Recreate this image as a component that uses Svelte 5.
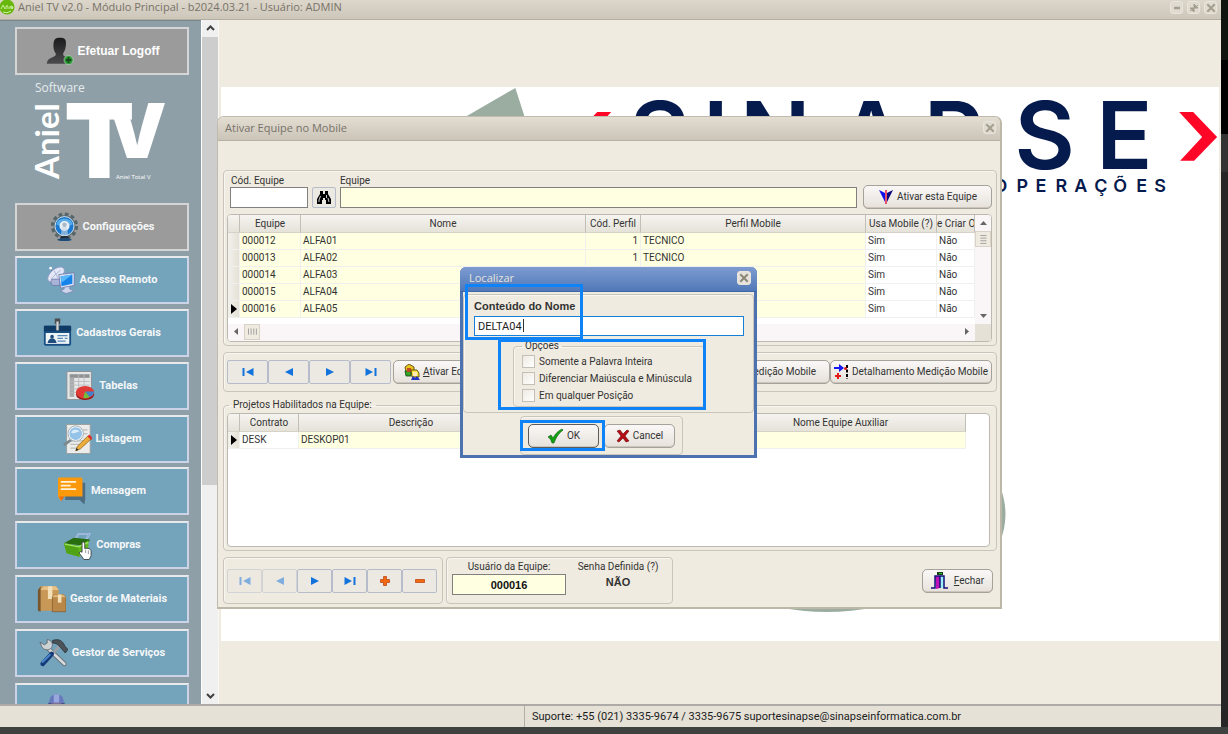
<script>
  const menuTop = [
    { label: 'Configurações', icon: 'gear', gray: true },
    { label: 'Acesso Remoto', icon: 'remote' },
    { label: 'Cadastros Gerais', icon: 'card' },
    { label: 'Tabelas', icon: 'sheet' },
    { label: 'Listagem', icon: 'list' }
  ];
  const menuBottom = [
    { label: 'Mensagem', icon: 'message' },
    { label: 'Compras', icon: 'basket' },
    { label: 'Gestor de Materiais', icon: 'boxes' },
    { label: 'Gestor de Serviços', icon: 'tools' },
    { label: '', icon: 'worker', aria: 'Equipes' }
  ];
  const teams = [
    { code: '000012', name: 'ALFA01', profile: '1', mobile: 'TECNICO' },
    { code: '000013', name: 'ALFA02', profile: '1', mobile: 'TECNICO' },
    { code: '000014', name: 'ALFA03', profile: '1', mobile: 'TECNICO' },
    { code: '000015', name: 'ALFA04', profile: '1', mobile: 'TECNICO' },
    { code: '000016', name: 'ALFA05', profile: '1', mobile: 'TECNICO', current: true }
  ];
  const nav = [
    { icon: 'first', aria: 'Primeiro' },
    { icon: 'prev', aria: 'Anterior' },
    { icon: 'next', aria: 'Próximo' },
    { icon: 'last', aria: 'Último' }
  ];
  const navProjects = [
    { icon: 'first', aria: 'Primeiro', off: true },
    { icon: 'prev', aria: 'Anterior', off: true },
    { icon: 'next', aria: 'Próximo' },
    { icon: 'last', aria: 'Último' },
    { icon: 'plus', aria: 'Incluir' },
    { icon: 'minus', aria: 'Excluir' }
  ];
  const options = ['Somente a Palavra Inteira', 'Diferenciar Maiúscula e Minúscula', 'Em qualquer Posição'];
  let code = $state('');
  let teamName = $state('');
  let search = $state('DELTA04');
  let userCode = $state('000016');
</script>

{#snippet menuIcon(name)}
  <svg class="menu-icon" viewBox="0 0 32 32" aria-hidden="true">
    {#if name === 'user'}
      <defs><linearGradient id="usr" x1="0" y1="0" x2="0" y2="1"><stop offset="0" stop-color="#1b1b1d" /><stop offset="1" stop-color="#4b4b4e" /></linearGradient></defs>
      <path fill="url(#usr)" d="M11 3c2-2 9-2 11 0c2 2 1 9 0 12c-1 2-2 3-2 5c1 3 10 3 10 10H2c0-7 9-7 10-10c0-2-2-3-2-5c-1-3-1-10 1-12z" />
      <circle cx="26" cy="26" r="5" fill="#2f9638" stroke="#c9e8c9" stroke-width=".6" /><path d="M26 23v6M23 26h6" stroke="#124d18" stroke-width="2.2" />
    {:else if name === 'gear'}
      <circle cx="16" cy="15" r="13" fill="none" stroke="#56666a" stroke-width="4" stroke-dasharray="4 2.8" />
      <circle cx="16" cy="15" r="12" fill="#5b6d73" /><circle cx="16" cy="15" r="10.5" fill="#1b78d0" stroke="#dcebf5" stroke-width="1" />
      <path d="M7 13c2-8 16-8 18 0c-5 3-13 3-18 0z" fill="#5badea" />
      <circle cx="16" cy="15" r="5.5" fill="#e9f1f6" /><circle cx="16" cy="13.500" r="2.500" fill="#a9bac6" /><path d="M13 16h6l1 10h-8z" fill="#c8d8e2" opacity=".6" />
      <path d="M12 26h8l1 3H11z" fill="#222e3a" /><ellipse cx="16" cy="30" rx="8" ry="1.5" fill="#1d4c7a" />
    {:else if name === 'remote'}
      <path d="M3 3l4 5" stroke="#79869c" stroke-width="1.200" /><circle cx="4" cy="3" r="1.500" fill="#fff" />
      <ellipse cx="10" cy="10" rx="11" ry="6" transform="rotate(-40 10 10)" fill="#e3e7f6" stroke="#8e98c6" stroke-width="1" />
      <path d="M5 14l10-9M8 6l4 8" stroke="#a2abd0" stroke-width=".9" /><path d="M5 15h9v7H6c-2-2-2-5-1-7z" fill="#aab3d8" stroke="#6873a5" stroke-width=".8" />
      <path d="M13 10l17-2v14l-15 3z" fill="#dfe5f7" stroke="#717caa" /><path d="M15 12l13-2v10l-12 3z" fill="#1683e9" /><path d="M15 12l13-2l-12 9z" fill="#5ab7fa" />
      <path d="M19 24l6-1v3l5 2l-9 3l-6-3l4-2z" fill="#cdd4ec" stroke="#7580ae" stroke-width=".7" />
    {:else if name === 'card'}
      <rect x="1" y="8" width="30" height="22" rx="2" fill="#174f83" /><rect x="1" y="8" width="30" height="6" fill="#103a66" />
      <rect x="3" y="16" width="26" height="12" fill="#eef3f6" /><circle cx="10" cy="20" r="2" fill="#1d4c7d" /><path d="M5 27c1-7 9-7 10 0z" fill="#1d4c7d" />
      <path d="M16 19h11M16 22h6M24 22h3M16 25h9" stroke="#5688b8" stroke-width="1.400" />
      <rect x="13" y="0" width="6" height="6" fill="#4a4d50" /><rect x="14.500" y="3" width="3" height="10" fill="#d5d9dc" stroke="#666" stroke-width=".6" />
    {:else if name === 'sheet'}
      <rect x="1" y="0" width="27" height="31" fill="#e5e7e7" stroke="#8b8f91" /><rect x="4" y="3" width="22" height="4" fill="#8f9394" /><rect x="4" y="7" width="5" height="21" fill="#a9adae" />
      <path d="M4 11h22M4 15h22M4 19h22M4 23h22M14 3v25M20 3v25" stroke="#b9bcbd" />
      <ellipse cx="21" cy="25" rx="10" ry="6.500" fill="#8e1211" /><ellipse cx="21" cy="23" rx="10" ry="7" fill="#e13936" /><path d="M21 22l10 0c0 3-2 5-5 6z" fill="#4383c9" /><path d="M21 22l5 6c-2 1-5 2-7 1z" fill="#70bf3c" />
    {:else if name === 'list'}
      <rect x="4" y="0" width="26" height="32" fill="#ecedeb" stroke="#999d9c" /><path d="M8 18h16M8 22h14M8 26h10M20 6h7M20 10h7" stroke="#bcbfbd" stroke-width="1.400" />
      <path d="M9 17L2 22" stroke="#7d888d" stroke-width="3" stroke-linecap="round" /><circle cx="14" cy="10" r="8" fill="#95c3e8" stroke="#f8fafa" stroke-width="2" /><circle cx="14" cy="10" r="8.500" fill="none" stroke="#7e8d97" stroke-width=".8" /><path d="M9 9c1-4 7-5 9-1c-3 0-6 3-9 1z" fill="#d9ecfa" />
      <path d="M14 29l2-5L27 13l4 3L19 27z" fill="#eead3b" stroke="#855c1b" stroke-width=".8" /><path d="M27 13l2-2l4 4l-2 2z" fill="#df2f2d" /><path d="M14 29l1-3l2 2z" fill="#222" />
    {:else if name === 'message'}
      <path d="M8 7h22v18l-1 6l-5-5H8z" fill="#4e6d80" /><path d="M0 3c0-2 1-2 2-2h23c1 0 2 0 2 2v19H6l-3 5l-3-5z" fill="#fb990b" /><path d="M1 22h6l-3 5z" fill="#e96d0b" /><path d="M3 6h17M3 10h11M3 14h17" stroke="#fff4dc" stroke-width="2" />
    {:else if name === 'basket'}
      <path d="M12 12l5-8h12l-6 10" fill="none" stroke="#b9d0f2" stroke-width="2" /><path d="M12 12l5-8h12l-6 10" fill="none" stroke="#6986b6" stroke-width=".6" />
      <path d="M1 14l11-6l18 2l-5 7z" fill="#286d0e" /><path d="M1 14l16 3l11-6v12l-10 6L4 25z" fill="#63b81e" /><path d="M1 14l16 3l1 12L4 25z" fill="#50a314" /><path d="M2 15l15 3l11-5" stroke="#a2e55b" fill="none" stroke-width="1.500" />
      <path d="M21 13c2-1 3 0 3 2v5c3-1 7 0 7 3v5l-2 4h-6l-5-7c0-2 2-2 3-1z" fill="#fff" stroke="#3c4245" stroke-width="1" /><path d="M25 21v4M28 22v4" stroke="#777" stroke-width=".8" />
    {:else if name === 'boxes'}
      <path d="M1 6l3-4h17l3 4v23H1z" fill="#c89856" /><path d="M1 6v23l3 1V2z" fill="#78572f" /><path d="M4 6l3-4h14l3 4z" fill="#e7c086" /><path d="M12 2h5v14h-5z" fill="#f3dfb8" />
      <path d="M17 14l2-3h10l3 3v16H17z" fill="#b98848" stroke="#81592d" stroke-width=".8" /><path d="M17 14l2-3h10l3 3z" fill="#dfb477" /><path d="M23 11h4v9h-4z" fill="#f3dfb8" />
    {:else if name === 'tools'}
      <path d="M9 10L28 28" stroke="#687177" stroke-width="5" stroke-linecap="round" /><path d="M9 10L28 28" stroke="#d7dbdd" stroke-width="3" stroke-linecap="round" />
      <path d="M1 4l5 3l3-2V1c5 1 7 5 5 9c-3 4-9 3-11-1z" fill="#cdd2d5" stroke="#646d73" />
      <path d="M23 8L13 19" stroke="#9ba1a5" stroke-width="3" /><path d="M14 17L4 28" stroke="#143b78" stroke-width="5" stroke-linecap="round" /><path d="M12 18L4 26" stroke="#4c88cf" stroke-width="2" stroke-linecap="round" />
      <path d="M15 2c7-2 11 0 14 7l3 3l-3 4l-7-8c-2-2-4-3-7-3z" fill="#4b5358" stroke="#262d31" stroke-width=".8" />
    {:else if name === 'worker'}
      <circle cx="16" cy="15" r="7" fill="#d98367" /><path d="M8 12C8 4 12 2 16 2s8 2 8 10z" fill="#6679bd" /><path d="M13 2h6v9h-6z" fill="#98a8dc" /><path d="M7 11c5 2 13 2 18 0v2c-5 2-13 2-18 0z" fill="#424f8c" />
    {/if}
  </svg>
{/snippet}

{#snippet navIcon(name)}
  <svg class="nav-icon" viewBox="0 0 12 10" aria-hidden="true">
    {#if name === 'first'}<path d="M.5 1h2v8h-2zM11.500 1v8L4 5z" />
    {:else if name === 'prev'}<path d="M10 1v8L2 5z" />
    {:else if name === 'next'}<path d="M2 1v8l8-4z" />
    {:else if name === 'last'}<path d="M.5 1v8L8 5zM9.500 1h2v8h-2z" />
    {:else if name === 'plus'}<path class="warm" d="M4.500.5h3v3h3v3h-3v3h-3v-3h-3v-3h3z" />
    {:else}<path class="warm" d="M1.500 3.500h9v3h-9z" />{/if}
  </svg>
{/snippet}

{#snippet cross()}
  <svg viewBox="0 0 10 10" width="10" height="10" aria-hidden="true"><path d="M2 2l6 6M8 2L2 8" stroke="currentColor" stroke-width="2" stroke-linecap="square" /></svg>
{/snippet}

{#snippet menuButton(item)}
  <li>
    <button class="menu-btn" class:gray={item.gray} class:start={!item.label} aria-label={item.aria}>
      {@render menuIcon(item.icon)}
      {#if item.label}<span>{item.label}</span>{/if}
    </button>
  </li>
{/snippet}

<div class="screen">
  <div class="app">
    <header class="app-title">
      <svg class="app-logo" viewBox="0 0 16 16" aria-hidden="true"><circle cx="7" cy="7" r="7.500" fill="#67b70c" /><path d="M1 9l2-4l2 4M6 9V6q2-1 2 1v2M10 6v3M11 8h2q0-2-2-2v2q1 1 2 0M3 12q4 2 8-1" fill="none" stroke="#d8f5ae" stroke-width=".9" /></svg>
      <h1>Aniel TV v2.0 - Módulo Principal - b2024.03.21 - Usuário: ADMIN</h1>
      <div class="win-btns">
        <button aria-label="Minimizar"><svg viewBox="0 0 10 10" width="10" height="10"><path d="M2 5h6" stroke="currentColor" stroke-width="2.500" /></svg></button>
        <button aria-label="Restaurar"><svg viewBox="0 0 10 10" width="10" height="10"><path d="M5 1v4h4zM1 5h4v4zM6 5l3-3M1 8l3-2" fill="currentColor" stroke="currentColor" /></svg></button>
        <button aria-label="Fechar janela">{@render cross()}</button>
      </div>
    </header>

    <div class="workspace">
      <nav class="sidebar">
        <button class="menu-btn gray logoff">{@render menuIcon('user')}<span>Efetuar Logoff</span></button>
        <svg class="brand" viewBox="0 0 174 128" role="img" aria-label="Software Aniel TV">
          <g fill="#fff">
            <text x="20" y="17" class="b-soft">Software</text>
            <text transform="translate(44 104) rotate(-90)" class="b-aniel">Aniel</text>
            <text x="49" y="103" class="b-t">T</text>
            <text x="92" y="83" class="b-v">V</text>
            <text x="101" y="104" class="b-tiny">Aniel Total V</text>
          </g>
        </svg>
        <ul class="menu five">{#each menuTop as item}{@render menuButton(item)}{/each}</ul>
        <ul class="menu six">{#each menuBottom as item}{@render menuButton(item)}{/each}</ul>
      </nav>
      <div class="side-scroll">
        <svg viewBox="0 0 17 17" width="17" height="17"><path d="M5 10l3.500-3.500L12 10" fill="none" stroke="#404040" stroke-width="2" /></svg>
        <div class="thumb"></div>
        <svg viewBox="0 0 17 17" width="17" height="17"><path d="M5 7l3.500 3.500L12 7" fill="none" stroke="#404040" stroke-width="2" /></svg>
      </div>
      <main class="desktop">
        <svg class="wallpaper" viewBox="221 87 998 555" role="img" aria-label="Sinapse Operações">
          <g fill="#9aada0"><path d="M515 88L418 144H533z" /><ellipse cx="827" cy="550" rx="125" ry="63" /><circle cx="935" cy="515" r="71" /></g>
          <g fill="#ff0526"><path d="M1180 112h14l24 25l-23 24h-14l22-24z" /><path d="M611 112h-14l-24 25l23 24h14l-22-24z" /></g>
          <text class="logo-word" y="169" x="629 703 740 838 924 1015 1097">SINAPSE</text>
          <text class="logo-sub" y="192" x="994 1017 1036 1056 1075 1095 1114 1137 1155">OPERAÇÕES</text>
        </svg>
      </main>
    </div>

    <footer class="status">
      <span class="cell"></span>
      <span class="cell">Suporte: +55 (021) 3335-9674 / 3335-9675 suportesinapse@sinapseinformatica.com.br</span>
    </footer>
  </div>

  <section class="window team" aria-label="Ativar Equipe no Mobile">
    <header><h2>Ativar Equipe no Mobile</h2><button class="close" aria-label="Fechar Ativar Equipe">{@render cross()}</button></header>
    <div class="team-body">
      <div class="panel search">
        <div class="search-row">
          <div class="field code"><label for="cod">Cód. Equipe</label><input id="cod" bind:value={code} /></div>
          <button class="flat binoc" aria-label="Localizar equipe">
            <svg viewBox="0 0 16 14" width="16" height="14"><path d="M4 0h3v3h2V0h3v3l3 5v5h-5V9H9V7H7v2H6v4H1V8l3-5z" fill="#000" /><path d="M4.500 5L3 9v2M10.500 4v3M12 7l1 4" stroke="#fff" stroke-width=".8" fill="none" /></svg>
          </button>
          <div class="field grow"><label for="eq">Equipe</label><input id="eq" class="yellow" bind:value={teamName} /></div>
          <button class="btn activate">
            <svg viewBox="0 0 16 16" width="16" height="16"><path d="M1 1l6 3l1 11z" fill="#1010ee" /><path d="M15 1L9 4L8 15z" fill="#080880" /><path d="M7 1h2v14H7z" fill="#e4526d" /></svg>
            <span>Ativar esta Equipe</span>
          </button>
        </div>
        <div class="grid">
          <div class="grid-main">
            <table class="teams">
              <colgroup><col class="w12" /><col class="w61" /><col /><col class="w55" /><col class="w225" /><col class="w71" /><col class="w38" /></colgroup>
              <thead><tr><th></th><th>Equipe</th><th>Nome</th><th>Cód. Perfil</th><th>Perfil Mobile</th><th>Usa Mobile (?)</th><th>e Criar O</th></tr></thead>
              <tbody>
                {#each teams as t}
                  <tr><td class="ind">{#if t.current}<i></i>{/if}</td><td>{t.code}</td><td>{t.name}</td><td class="num">{t.profile}</td><td>{t.mobile}</td><td class="plain">Sim</td><td class="plain">Não</td></tr>
                {/each}
              </tbody>
            </table>
            <div class="vscroll">
              <svg viewBox="0 0 16 16" width="16" height="16"><path d="M5 10h7L8.500 6z" fill="#666" /></svg>
              <div class="grip"><svg viewBox="0 0 16 16" width="14" height="14"><path d="M5 4h7M5 7h7M5 10h7M5 13h7" stroke="#999" /></svg></div>
              <span class="spring"></span>
              <svg viewBox="0 0 16 16" width="16" height="16"><path d="M5 6h7l-3.500 4z" fill="#666" /></svg>
            </div>
          </div>
          <div class="hscroll">
            <svg viewBox="0 0 16 16" width="16" height="16"><path d="M10 4v7L6 7.500z" fill="#666" /></svg>
            <div class="grip"><svg viewBox="0 0 16 16" width="14" height="14"><path d="M4 4v7M7 4v7M10 4v7M13 4v7" stroke="#999" /></svg></div>
            <span class="spring"></span>
            <svg viewBox="0 0 16 16" width="16" height="16"><path d="M6 4v7l4-3.500z" fill="#666" /></svg>
            <span class="corner"></span>
          </div>
        </div>
      </div>

      <div class="panel toolbar">
        <div class="navs wide">{#each nav as n}<button class="flat" aria-label={n.aria}>{@render navIcon(n.icon)}</button>{/each}</div>
        <button class="btn people">
          <svg viewBox="0 0 16 16" width="16" height="16"><path d="M1 3l4-3l5 3v5H2z" fill="#e8c51c" stroke="#4b3600" stroke-width=".8" /><path d="M1 7h6v5H2z" fill="#35a528" stroke="#154b0c" stroke-width=".8" /><path d="M3 4h4v4H3z" fill="#c34825" /><path d="M7 6h6l2 3v4H8z" fill="#f2e538" stroke="#4b3600" stroke-width=".8" /><path d="M9 8h4v4H9z" fill="#ffe9bd" /><path d="M7 16l2-4l2 2l2-2l3 4z" fill="#2030c0" /></svg>
          <span><u>A</u>tivar Equipe</span>
        </button>
        <span class="spring"></span>
        <button class="btn measure"><span>Medição Mobile</span></button>
        <button class="btn detail">
          <svg viewBox="0 0 16 16" width="16" height="16"><path d="M0 3h5V0l5 4l-5 4V5H0z" fill="#1616f0" /><path d="M3 9h2v2h2v2H5v2H3v-2H1v-2h2z" fill="#e41b1b" /><path d="M13 1v14" stroke="#000" stroke-width="2" stroke-dasharray="3 1.500" /><circle cx="11.500" cy="4.500" r="1.500" fill="#e41b1b" /></svg>
          <span>Detalhamento Medição Mobile</span>
        </button>
      </div>

      <fieldset class="panel projects">
        <legend>Projetos Habilitados na Equipe:</legend>
        <div class="grid project-grid">
          <table>
            <colgroup><col class="w12" /><col class="w59" /><col class="w225" /><col /><col class="w250" /></colgroup>
            <thead><tr><th></th><th>Contrato</th><th>Descrição</th><th></th><th>Nome Equipe Auxiliar</th></tr></thead>
            <tbody><tr><td class="ind"><i></i></td><td class="plain">DESK</td><td>DESKOP01</td><td></td><td></td></tr></tbody>
          </table>
        </div>
      </fieldset>

      <div class="bottom">
        <div class="panel crud"><div class="navs">{#each navProjects as n}<button class="flat" aria-label={n.aria} disabled={n.off}>{@render navIcon(n.icon)}</button>{/each}</div></div>
        <div class="panel user">
          <div class="user-field"><label for="usr-eq">Usuário da Equipe:</label><input id="usr-eq" class="yellow strong" bind:value={userCode} /></div>
          <div class="user-field pass"><span>Senha Definida (?)</span><b>NÃO</b></div>
        </div>
        <button class="btn exit">
          <svg viewBox="0 0 18 18" width="18" height="18"><path d="M4 4h9v12H4z" fill="#9ff0f4" /><path d="M4 4h5v12l-4 1z" fill="#c010b8" /><path d="M0 16h4V4h9v12h4M9 4v12" fill="none" stroke="#12127a" stroke-width="1.500" /><path d="M6 0h6v3H6z" fill="#163c16" /><path d="M8 1h3v1H8z" fill="#29c429" /></svg>
          <span><u>F</u>echar</span>
        </button>
      </div>
    </div>
  </section>

  <section class="window find" aria-label="Localizar">
    <header><h2>Localizar</h2><button class="close" aria-label="Fechar Localizar">{@render cross()}</button></header>
    <div class="find-body">
      <div class="panel query">
        <label class="q-label" for="q">Conteúdo do Nome</label>
        <div class="q-wrap"><input id="q" bind:value={search} /><i class="caret"></i></div>
        <fieldset class="panel opts">
          <legend>Opções</legend>
          {#each options as o}<label class="check"><input type="checkbox" /><span>{o}</span></label>{/each}
        </fieldset>
      </div>
      <div class="panel actions">
        <button class="btn ok"><svg viewBox="0 0 16 16" width="16" height="16"><path d="M1 9l3-2l2 3C8 6 11 3 15 1l1 1C11 6 9 10 7 15H5C4 12 3 10 1 9z" fill="#12a012" stroke="#0a5c0a" stroke-width=".6" /></svg><span>OK</span></button>
        <button class="btn cancel"><svg viewBox="0 0 14 14" width="14" height="14"><path d="M1 2l3-1l3 4l4-4l2 1l-4 5l4 5l-3 1l-3-4l-4 4l-2-1l4-5z" fill="#b40d16" stroke="#6d060b" stroke-width=".6" /></svg><span>Cancel</span></button>
      </div>
    </div>
    <i class="mark mark-name"></i><i class="mark mark-opts"></i><i class="mark mark-ok"></i>
  </section>
</div>

<style>
  :global(body) { margin: 0; background: #2b2c2c; }
  * { box-sizing: border-box; }
  button, input { font: inherit; color: inherit; }
  h1, h2, ul { margin: 0; padding: 0; font-weight: 400; list-style: none; }
  svg { display: block; flex: none; }
  .screen { position: relative; height: 100vh; min-height: 640px; padding: 0 7px 7px 0; overflow: hidden; background: linear-gradient(#3f4040, #3f4040) bottom / 100% 7px no-repeat, linear-gradient(#10160f 0 60px, #000 60px 134px, #333 134px 172px, #262626 172px); font: 10px/14px Roboto, sans-serif; color: #333; }
  .app { display: flex; flex-direction: column; height: 100%; background: #efebe0; }
  .app-title { display: flex; align-items: flex-start; height: 20px; flex: none; padding-right: 4px; background: linear-gradient(#ddd6ca, #cdc6ba); border-bottom: 1px solid #b4ae9f; }
  .app-title h1 { font: 11px/14px "Open Sans", sans-serif; color: #777269; flex: 1; }
  .app-logo { width: 16px; height: 16px; margin-right: 2px; }
  .win-btns { display: flex; gap: 4px; padding-top: 1px; }
  .win-btns button, .close { display: grid; place-items: center; width: 13px; height: 13px; padding: 0; border: 1px solid #e9e5dc; border-radius: 3px; background: #e0dbd0; color: #a39e8d; }
  .workspace { display: flex; flex: 1; min-height: 0; }
  .sidebar { width: 201px; flex: none; padding: 6px 12px 0 15px; overflow: hidden; background: #8e9fa7; border-top: 1px solid #78868d; }
  .menu-btn { display: flex; align-items: center; justify-content: center; gap: 4px; width: 100%; height: 48px; padding: 0; border: 2px solid #ccd3e6; border-top-color: #e9e9ec; background: #74a3bc; color: #f4f7f8; font: bold 11px/16px Roboto, sans-serif; }
  .menu-btn.gray { background: #9b9b9b; border-color: #d5d5d5; }
  .menu-btn.start { justify-content: flex-start; padding-left: 25px; }
  .menu-btn.logoff { font: bold 12px/16px "Liberation Sans", sans-serif; color: #fff; }
  .menu-icon { width: 29px; height: 30px; }
  .brand { width: 174px; height: 128px; }
  .b-soft { font: 12px "Open Sans", sans-serif; fill: #e6ebee; }
  .b-aniel { font: bold 33px Lato, sans-serif; }
  .b-t { font: 900 103px Inter, sans-serif; }
  .b-v { font: 900 75px Inter, sans-serif; }
  .b-tiny { font: 6px "Open Sans", sans-serif; }
  .menu { display: flex; flex-direction: column; gap: 5px; }
  .menu.six { gap: 6px; margin-top: 4px; }
  .side-scroll { display: flex; flex-direction: column; width: 17px; flex: none; background: #f0f0f0; border-left: 1px solid #fff; }
  .side-scroll .thumb { flex: 1; background: linear-gradient(#cdcdcd 69%, #f0f0f0 69%); }
  .desktop { flex: 1; min-width: 0; padding: 67px 2px 63px 2px; border-left: 1px solid #f9f7f2; }
  .wallpaper { width: 100%; height: 100%; background: #fff; }
  .logo-word { font: 600 93px Inter, sans-serif; fill: #051a4d; }
  .logo-sub { font: 600 18px Inter, sans-serif; fill: #051a4d; }
  .status { display: flex; height: 23px; flex: none; background: #e5e1d6; border-top: 2px solid #adaaa8; font: 11px/21px Roboto, sans-serif; color: #1c1c1c; }
  .status .cell:first-child { width: 43%; flex: none; border-right: 1px solid #b2aea4; }
  .status .cell:last-child { padding-left: 7px; white-space: nowrap; }

  .window { position: absolute; white-space: nowrap; }
  .window header { display: flex; align-items: center; justify-content: space-between; padding: 0 6px 2px 7px; }
  .window h2 { font: 11px/20px "Open Sans", sans-serif; color: #777269; }
  .team { left: 217px; top: 116px; width: 785px; background: #efebe0; border: 1px solid #c1bbad; border-right: 2px solid #bdb7a8; border-bottom: 2px solid #bdb7a8; border-radius: 7px 7px 0 0; }
  .team header { height: 24px; padding-right: 4px; background: linear-gradient(#e3ddd2, #cbc4b8); border-bottom: 1px solid #b7b1a3; border-radius: 6px 6px 0 0; }
  .team-body { padding: 29px 3px 3px 5px; }
  .panel { min-width: 0; margin: 0; padding: 0; border: 1px solid #c9c5bb; border-radius: 4px; box-shadow: inset 1px 1px #f8f6f0; }
  .search { padding: 4px 4px 3px 3px; margin-bottom: 6px; }
  .search-row { display: flex; align-items: flex-end; gap: 4px; padding: 0 0 6px 3px; }
  .field { display: flex; flex-direction: column; }
  .field label { line-height: 11px; margin-bottom: 1px; }
  .field.code { width: 78px; }
  .field.code label { padding-left: 1px; }
  .grow { flex: 1; margin-right: 2px; }
  .field input, .user-field input { width: 100%; height: 21px; padding: 0 4px; border: 1px solid #81807e; border-radius: 0; background: #fff; }
  input.yellow { background: #ffffe1; }
  .flat { display: grid; place-items: center; padding: 0; border: 1px solid #b7bccb; border-radius: 2px; background: #ece8e2; }
  .binoc { width: 24px; height: 21px; }
  .btn { display: flex; align-items: center; justify-content: center; gap: 3px; height: 24px; padding: 0 3px; border: 1px solid #a5a19b; border-radius: 5px; background: linear-gradient(#faf8f7, #e6e1da); box-shadow: inset 0 -1px #cbc5bc; }
  .activate { width: 129px; }
  .search-row .btn { margin-bottom: -1px; }
  .grid { border: 1px solid #bdb9b1; border-radius: 4px; background: #fff; overflow: hidden; }
  .grid-main { display: flex; height: 109px; }
  table { width: 100%; border-collapse: separate; border-spacing: 0; table-layout: fixed; }
  .teams { flex: none; width: calc(100% - 16px); align-self: flex-start; }
  .w12 { width: 12px; } .w38 { width: 38px; } .w55 { width: 55px; } .w59 { width: 59px; } .w61 { width: 61px; } .w71 { width: 71px; } .w225 { width: 225px; } .w250 { width: 250px; }
  th, td { padding: 0 2px; height: 17px; line-height: 16px; overflow: hidden; text-align: left; border-right: 1px solid #f0f0ee; border-bottom: 1px solid #f0f0ee; }
  td { background: #ffffe1; }
  td.plain { background: #fff; }
  th { height: 18px; font-weight: 400; text-align: center; background: linear-gradient(#f6f4f0, #e5e2d9); border-right-color: #c2bfb6; border-bottom-color: #d6d2c7; padding: 0; }
  td.ind { background: linear-gradient(90deg, #f3f1ec, #e4e1d6); padding: 0 0 0 3px; }
  td.ind i { display: block; border-left: 6px solid #000; border-top: 5px solid transparent; border-bottom: 5px solid transparent; }
  td.num { text-align: right; }
  .vscroll { display: flex; flex-direction: column; width: 16px; background: #faf6f7; }
  .hscroll { display: flex; height: 17px; background: #faf6f7; }
  .grip { width: 16px; height: 16px; border: 1px solid #d8d3c6; background: #efebe0; }
  .spring { flex: 1; }
  .corner { width: 16px; background: #e5e1d6; }
  .toolbar { display: flex; align-items: center; height: 40px; padding: 0 4px 0 3px; margin-bottom: 6px; }
  .navs { display: flex; }
  .navs .flat { width: 35px; height: 24px; }
  .navs.wide { margin-right: 2px; }
  .navs.wide .flat { width: 41px; }
  .navs .flat:disabled { opacity: .5; }
  .nav-icon { width: 12px; height: 10px; fill: #1273dd; }
  .nav-icon .warm { fill: #f26a10; stroke: #b93b08; stroke-width: .7; }
  .people { width: 130px; justify-content: flex-start; padding-left: 10px; }
  .measure { width: 170px; justify-content: flex-end; padding-right: 13px; }
  .detail { width: 162px; gap: 2px; }
  .projects { padding: 1px 6px 3px 3px; }
  legend { padding: 0 4px; margin-left: 2px; line-height: 14px; }
  .project-grid { height: 134px; }
  .project-grid table { width: calc(100% - 23px); }
  .bottom { display: flex; align-items: center; gap: 3px; margin-top: 6px; height: 47px; }
  .crud { width: 220px; height: 47px; padding: 11px 3px; }
  .user { display: flex; width: 227px; height: 47px; padding: 1px 5px; gap: 3px; }
  .user-field { display: flex; flex-direction: column; align-items: center; flex: none; width: 114px; line-height: 15px; }
  .user-field.pass { width: 98px; }
  .user-field b { line-height: 16px; font-family: "Liberation Sans", sans-serif; font-size: 11px; }
  .user-field .strong { text-align: center; font: bold 11px "Liberation Sans", sans-serif; color: #111; }
  .exit { width: 71px; gap: 5px; margin: 0 4px 0 auto; }

  .find { left: 460px; top: 267px; width: 297px; background: #efebe0; border: 3px solid #4c72b0; border-top: 0; border-radius: 6px 6px 0 0; }
  .find header { height: 25px; margin: 0 -3px; padding-left: 9px; border-radius: 6px 6px 0 0; border-bottom: 1px solid #3f66a5; background: linear-gradient(#7d9bd0, #5179b8); }
  .find h2 { color: #e6e4dc; }
  .find .close { background: #e6e3dc; color: #8c8878; width: 14px; height: 14px; }
  .find-body { padding: 2px 0 0; }
  .query { display: flex; flex-direction: column; height: 119px; padding: 4px 9px 0 10px; }
  .q-label { font: bold 11px/14px "Liberation Sans", sans-serif; }
  .q-wrap { position: relative; margin-top: 3px; }
  .q-wrap input { display: block; width: 100%; height: 20px; padding: 0 3px; border: 1px solid #1580d8; border-radius: 0; background: #fff; color: #222; font-size: 11px; outline: 0; }
  .caret { position: absolute; left: 49px; top: 3px; width: 1px; height: 13px; background: #333; }
  .opts { margin: 3px 39px 0; padding: 0 0 2px 8px; }
  .opts legend { margin-left: 0; padding: 0 3px; line-height: 14px; }
  .check { display: flex; align-items: center; gap: 4px; height: 17px; }
  .check input { appearance: none; flex: none; width: 13px; height: 13px; margin: 0; border: 1px solid #c4c0b8; background: linear-gradient(135deg, #efeae2, #fff); }
  .actions { display: flex; align-items: center; gap: 5px; width: 163px; height: 39px; margin: 3px 0 0 57px; padding: 0 7px; }
  .actions .btn { width: 71px; }
  .actions .ok { border-color: #5e5c5a; gap: 4px; }
  .mark { position: absolute; border: 3px solid #0d83f7; pointer-events: none; }
  .mark-name { left: 2px; top: 17px; width: 118px; height: 56px; }
  .mark-opts { left: 35px; top: 72px; width: 208px; height: 71px; }
  .mark-ok { left: 57px; top: 153px; width: 85px; height: 31px; }
</style>
